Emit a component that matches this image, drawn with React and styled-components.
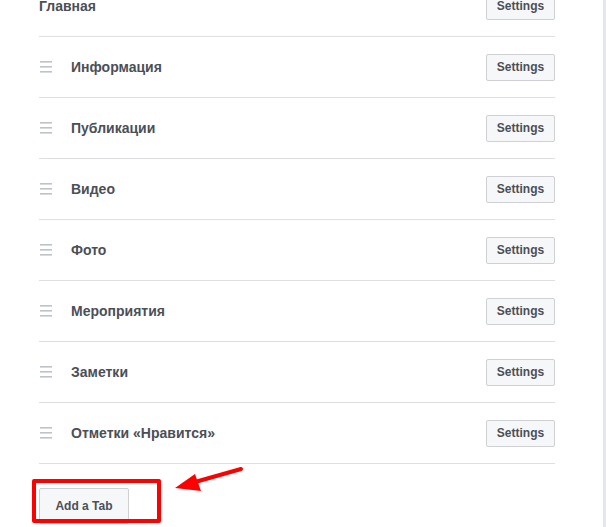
import React from "react";
import styled, { createGlobalStyle } from "styled-components";

const GlobalStyle = createGlobalStyle`
  html, body {
    margin: 0;
    padding: 0;
    background: #fff;
  }
  body {
    font-family: "Liberation Sans", Arial, sans-serif;
  }
`;

const Page = styled.div`
  box-sizing: border-box;
  width: 606px;
  height: 527px;
  overflow: hidden;
  padding: 0 48px 0 39px;
  border-right: 3px solid #e5e6e9;
`;

const TabList = styled.ul`
  list-style: none;
  margin: -24px 0 0;
  padding: 0;
`;

const TabRow = styled.li`
  display: flex;
  align-items: center;
  height: 60px;
  border-bottom: 1px solid #dddfe2;
`;

const Handle = styled.svg`
  flex: none;
  width: 12px;
  height: 12px;
  margin: 0 19px 0 1px;
  color: #bec2c9;
`;

const Label = styled.span`
  flex: 1;
  font-size: 14px;
  font-weight: 700;
  color: #4b4f56;
`;

const Button = styled.button`
  box-sizing: border-box;
  width: ${props => (props.large ? "90px" : "69px")};
  height: ${props => (props.large ? "36px" : "27px")};
  padding: 0;
  background: #f6f7f9;
  border: 1px solid #ced0d4;
  border-radius: 2px;
  font-family: "Liberation Sans", Arial, sans-serif;
  font-size: 12px;
  font-weight: 700;
  color: #4b4f56;
  cursor: pointer;
`;

const Footer = styled.div`
  position: relative;
  padding-top: 24px;
`;

const Highlight = styled.div`
  position: absolute;
  left: -7px;
  top: 15px;
  width: 129px;
  height: 44px;
  box-sizing: border-box;
  border: 4px solid #ff0000;
  border-radius: 2px;
`;

const Arrow = styled.svg`
  position: absolute;
  left: 134px;
  top: 2px;
  width: 72px;
  height: 28px;
`;

const DragIcon = () => (
  <Handle viewBox="0 0 12 12">
    <rect x="0" y="0" width="12" height="1.6" fill="currentColor" />
    <rect x="0" y="5" width="12" height="1.6" fill="currentColor" />
    <rect x="0" y="10" width="12" height="1.6" fill="currentColor" />
  </Handle>
);

const App = () => {
  const tabs = [
    { name: "Главная", fixed: true },
    { name: "Информация" },
    { name: "Публикации" },
    { name: "Видео" },
    { name: "Фото" },
    { name: "Мероприятия" },
    { name: "Заметки" },
    { name: "Отметки «Нравится»" }
  ];

  return (
    <>
      <GlobalStyle />
      <Page>
        <TabList>
          {tabs.map((tab, index) => (
            <TabRow key={index}>
              {tab.fixed ? null : <DragIcon />}
              <Label>{tab.name}</Label>
              <Button>Settings</Button>
            </TabRow>
          ))}
        </TabList>
        <Footer>
          <Button large>Add a Tab</Button>
          <Highlight />
          <Arrow viewBox="0 0 72 28">
            <line x1="68" y1="3" x2="22" y2="16" stroke="#ff0000" strokeWidth="4" strokeLinecap="round" />
            <polygon points="2,22 22,8 28,25" fill="#ff0000" />
          </Arrow>
        </Footer>
      </Page>
    </>
  );
};

export default App;
